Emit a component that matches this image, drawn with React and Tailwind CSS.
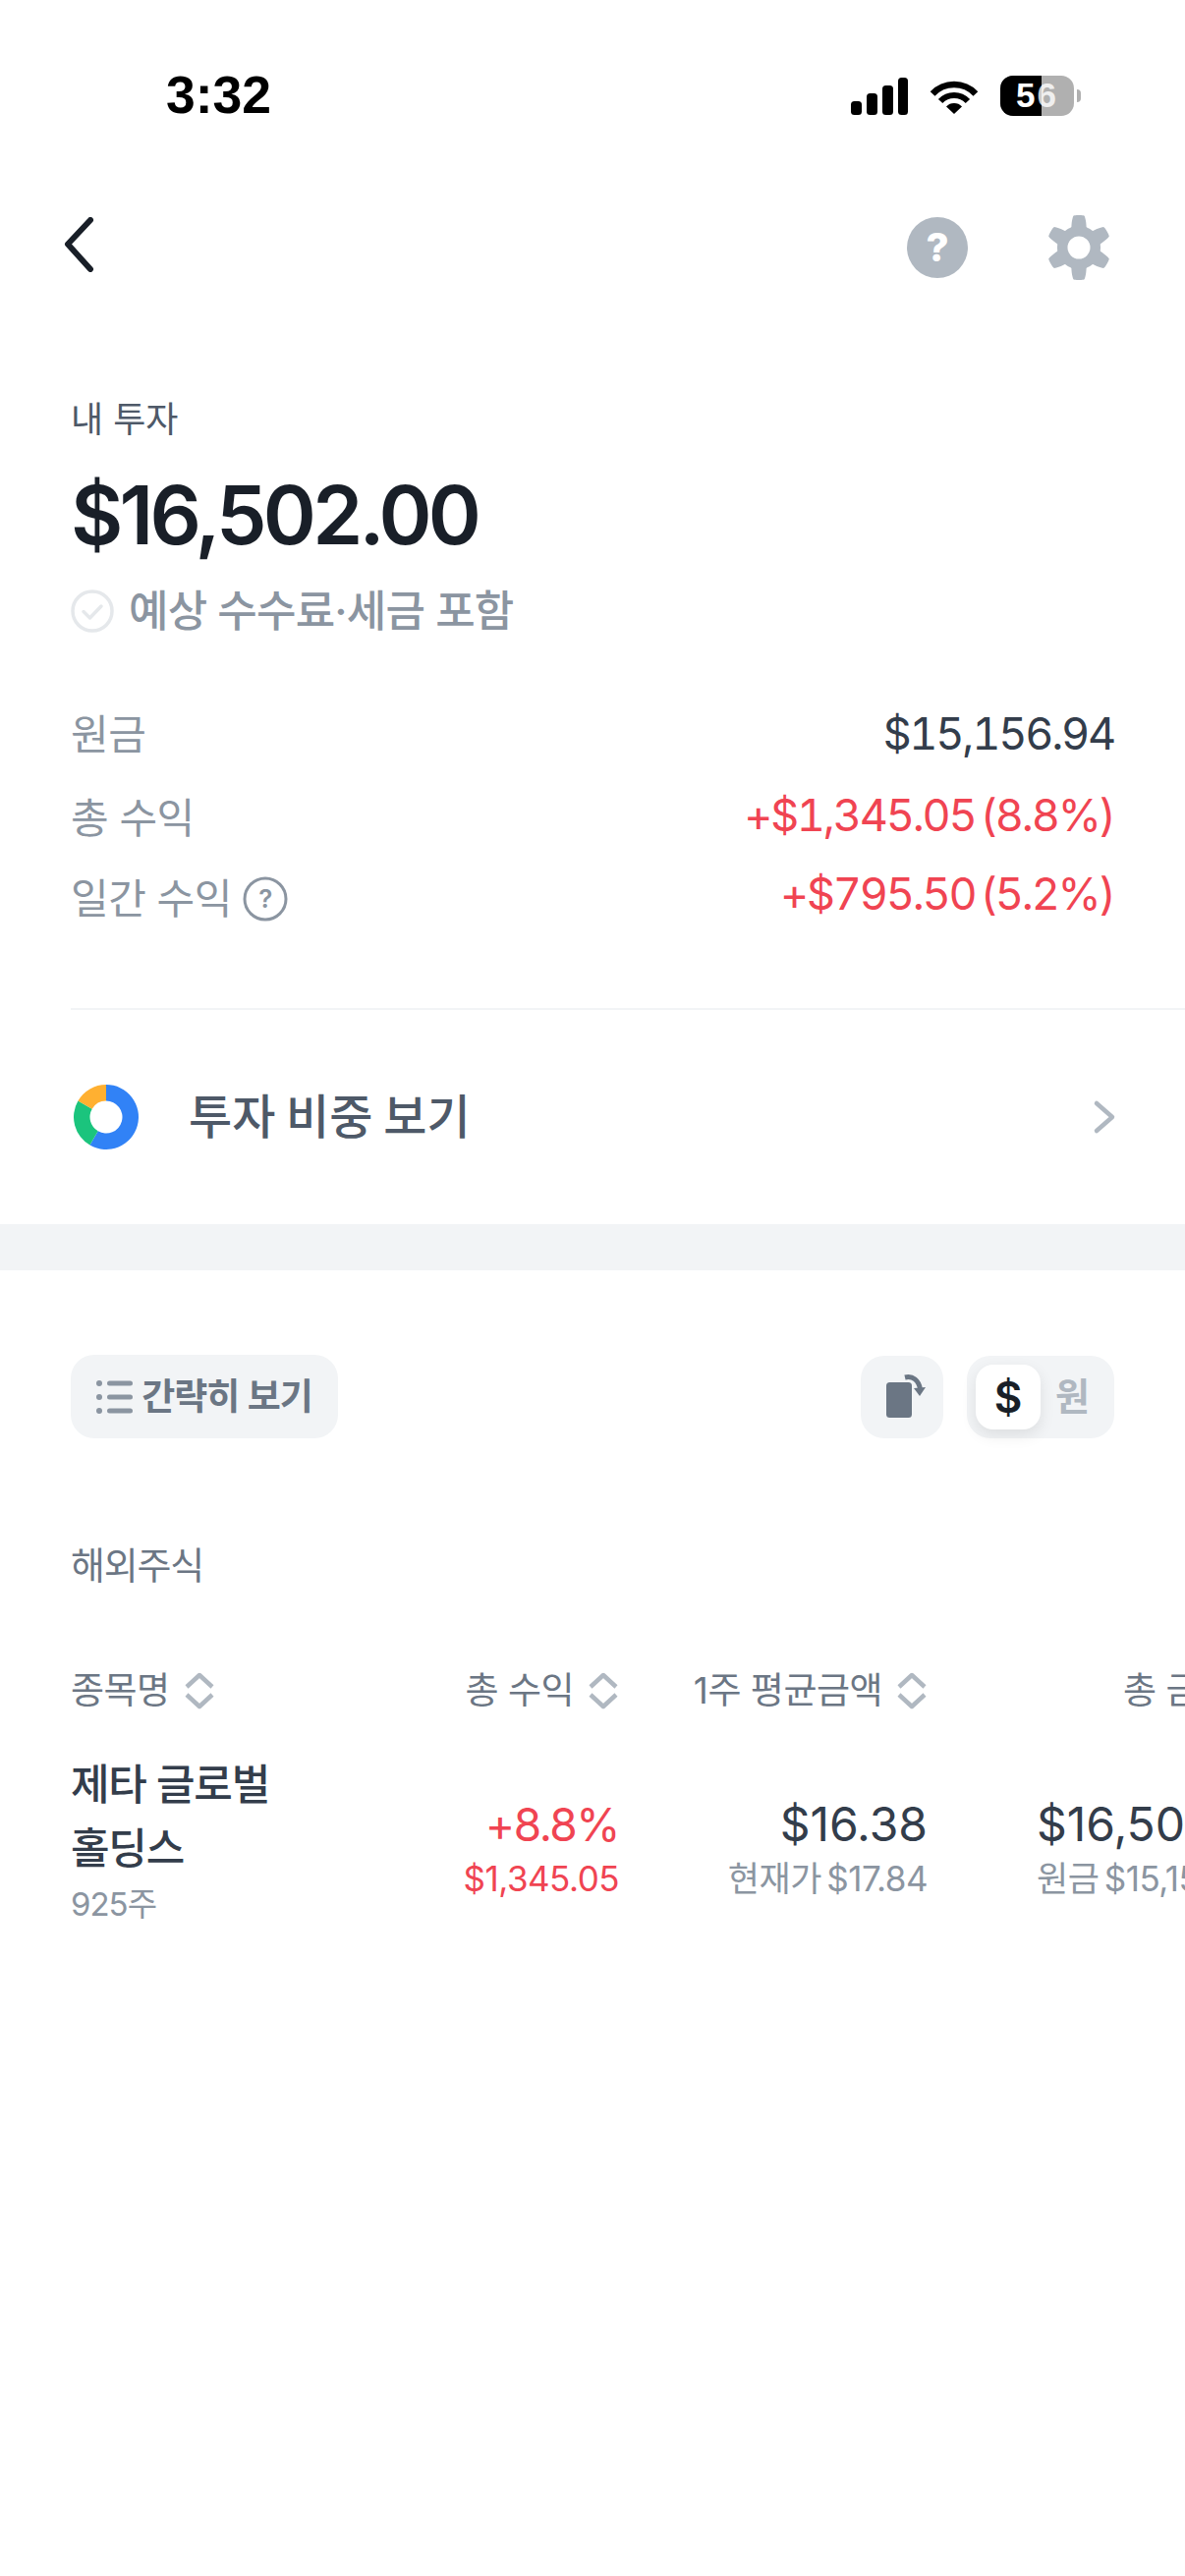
const font = { fontFamily: '"Inter", "Noto Sans CJK KR", sans-serif' };

function polar(cx, cy, r, deg) {
  const a = ((deg - 90) * Math.PI) / 180;
  return [cx + r * Math.cos(a), cy + r * Math.sin(a)];
}
function slice(from, to) {
  const [a, b] = polar(33, 33, 33, from);
  const [c, d] = polar(33, 33, 33, to);
  const [e, f] = polar(33, 33, 16.5, to);
  const [g, h] = polar(33, 33, 16.5, from);
  const large = to - from > 180 ? 1 : 0;
  return `M${a} ${b}A33 33 0 ${large} 1 ${c} ${d}L${e} ${f}A16.5 16.5 0 ${large} 0 ${g} ${h}Z`;
}
function gearPath() {
  let d = '';
  for (let i = 0; i <= 360; i += 2) {
    const t = Math.max(-1, Math.min(1, Math.cos((i * 6 * Math.PI) / 180) * 1.9));
    const [x, y] = polar(34, 34, 27.5 + 5.5 * t, i);
    d += `${i === 0 ? 'M' : 'L'}${x.toFixed(2)} ${y.toFixed(2)}`;
  }
  return d + 'ZM34 22.5a11.5 11.5 0 1 0 0 23a11.5 11.5 0 1 0 0-23Z';
}

function Sort() {
  return (
    <svg width="32" height="38" viewBox="0 0 32 38" fill="none" stroke="#b0b8c1" strokeWidth="4.5" strokeLinejoin="round" className="shrink-0">
      <path d="M3 15L16 3L29 15" />
      <path d="M3 23L16 35L29 23" />
    </svg>
  );
}

function Stat({ label, value, red, extra, mt, valueClass }) {
  return (
    <div className={`flex items-center justify-between h-[50px] ${mt}`}>
      <div className="flex items-center gap-[11px] text-[42px] tracking-[-0.5px] text-[#8b95a1] leading-[50px]">
        {label}
        {extra}
      </div>
      <div className={`text-[45px] leading-[50px] tabular-nums tracking-[-2.2px] [word-spacing:-5px] ${valueClass} ${red ? 'text-[#f04452]' : 'text-[#333d4b]'}`}>{value}</div>
    </div>
  );
}

function Col({ head, w, children }) {
  return (
    <div className={`${w} shrink-0 flex flex-col items-end`}>
      <div className="h-[50px] flex items-center gap-[14px] text-[37px] text-[#6b7684] tracking-[-0.5px]">{head} <Sort /></div>
      <div className="mt-[80px] flex flex-col items-end">{children}</div>
    </div>
  );
}

export default function App() {
  return (
    <div style={font} className="w-[1206px] h-[2622px] bg-white overflow-hidden">
      <div className="h-[194px] pt-[68px] pl-[169px] pr-[106px] flex justify-between items-start">
        <div className="text-[53.5px] leading-[58px] text-black" style={{ fontFamily: '"Liberation Sans", sans-serif', fontWeight: 700 }}>3:32</div>
        <div className="flex items-center gap-[22px] pt-[9px]">
          <svg width="58" height="38" viewBox="0 0 58 38" fill="#000">
            <rect x="0" y="24" width="11" height="14" rx="3.5" />
            <rect x="16" y="16" width="11" height="22" rx="3.5" />
            <rect x="32" y="8" width="11" height="30" rx="3.5" />
            <rect x="48" y="0" width="10" height="38" rx="3.5" />
          </svg>
          <svg width="50" height="38" viewBox="0 0 50 38" fill="none" stroke="#000">
            <path d="M3.1 16.5A30 30 0 0 1 46.9 16.5" strokeWidth="6.5" />
            <path d="M11.1 24A19 19 0 0 1 38.9 24" strokeWidth="6" />
            <path d="M25 37L17 29.5A11 11 0 0 1 33 29.5Z" fill="#000" stroke="none" />
          </svg>
          <div className="flex items-center">
            <div className="relative w-[75px] h-[41px] rounded-[13px] overflow-hidden bg-[#b0b0b0] flex">
              <div className="w-[42px] h-full bg-black" />
              <div className="absolute inset-0 flex items-center justify-center text-[35px] font-bold text-white tracking-[2px]" style={{ fontFamily: '"Liberation Sans", sans-serif' }}>5<span className="text-white/80">6</span></div>
            </div>
            <div className="w-[4px] h-[13px] ml-[3px] bg-[#b0b0b0] rounded-r-full" />
          </div>
        </div>
      </div>

      <div className="h-[112px] pl-[62px] pr-[74px] flex items-center justify-between">
        <svg width="36" height="56" viewBox="0 0 36 56" fill="none" stroke="#191f28" strokeWidth="6" strokeLinecap="round" strokeLinejoin="round" className="mb-[2px]">
          <path d="M30 3L7 27.5L30 53" />
        </svg>
        <div className="flex items-center gap-[78px] pt-[3px]">
          <svg width="64" height="64" viewBox="0 0 64 64">
            <circle cx="32" cy="32" r="31" fill="#b0b8c1" />
            <text x="32" y="46" textAnchor="middle" fontSize="40" fontWeight="800" fill="#fff" fontFamily="Inter">?</text>
          </svg>
          <svg width="68" height="68" viewBox="0 0 68 68" fill="#b0b8c1" fillRule="evenodd">
            <path d={gearPath()} />
          </svg>
        </div>
      </div>

      <div className="px-[72px] pt-[95px]">
        <div className="text-[36px] leading-[52px] text-[#4e5968]">내 투자</div>
        <div className="mt-[24px] text-[82px] leading-[96px] font-semibold text-[#191f28] tracking-[-3.8px]">$16,502.00</div>
        <div className="mt-[24px] flex items-center gap-[15px] h-[50px]">
          <svg width="44" height="44" viewBox="0 0 44 44" fill="none">
            <circle cx="22" cy="22" r="20" stroke="#e5e8eb" strokeWidth="3.5" />
            <path d="M13 22.5L19.5 29L31 17" stroke="#e5e8eb" strokeWidth="3.5" strokeLinecap="round" strokeLinejoin="round" />
          </svg>
          <div className="text-[44px] leading-[50px] font-medium text-[#8b95a1] tracking-[-0.8px]">예상 수수료·세금 포함</div>
        </div>
      </div>

      <div className="pl-[72px] pr-[72px] mt-[76px]">
        <Stat label="원금" value="$15,156.94" valueClass="mb-[2px]" />
        <Stat label="총 수익" value="+$1,345.05 (8.8%)" red mt="mt-[35px]" valueClass="mb-[6px]" />
        <Stat
          label="일간 수익"
          value="+$795.50 (5.2%)"
          red
          mt="mt-[32px]"
          valueClass="mb-[10px]"
          extra={
            <svg width="46" height="46" viewBox="0 0 46 46" fill="none">
              <circle cx="23" cy="23" r="21" stroke="#8b95a1" strokeWidth="3" />
              <text x="23" y="32" textAnchor="middle" fontSize="26" fontWeight="600" fill="#8b95a1" fontFamily="Inter" stroke="none">?</text>
            </svg>
          }
        />
      </div>

      <div className="ml-[72px] mt-[86px] h-[2px] bg-[#f2f4f6]" />

      <div className="h-[218px] pl-[75px] pr-[70px] flex items-center justify-between">
        <div className="flex items-center gap-[51px]">
          <svg width="66" height="66" viewBox="0 0 66 66">
            <path d={slice(0, 210)} fill="#3182f6" />
            <path d={slice(210, 300)} fill="#1bc47d" />
            <path d={slice(300, 360)} fill="#ffb031" />
          </svg>
          <div className="text-[48px] leading-[60px] font-medium text-[#4e5968] [word-spacing:-2px]">투자 비중 보기</div>
        </div>
        <svg width="24" height="36" viewBox="0 0 24 36" fill="none" stroke="#b0b8c1" strokeWidth="4.5" strokeLinecap="round" strokeLinejoin="round">
          <path d="M4 4L20 18L4 32" />
        </svg>
      </div>

      <div className="h-[47px] bg-[#f2f4f6]" />

      <div className="px-[72px] pt-[86px] flex items-center justify-between">
        <div className="h-[85px] w-[272px] rounded-[24px] bg-[#f2f4f6] flex items-center justify-center gap-[9px]">
          <svg width="37" height="34" viewBox="0 0 37 34" fill="#8b95a1">
            <circle cx="3" cy="3" r="3" />
            <circle cx="3" cy="17" r="3" />
            <circle cx="3" cy="31" r="3" />
            <rect x="11" y="0.5" width="26" height="5" rx="2.5" />
            <rect x="11" y="14.5" width="26" height="5" rx="2.5" />
            <rect x="11" y="28.5" width="26" height="5" rx="2.5" />
          </svg>
          <div className="text-[37px] font-semibold text-[#6b7684] tracking-[-1px]">간략히 보기</div>
        </div>
        <div className="flex items-center gap-[24px]">
          <div className="w-[84px] h-[84px] rounded-[24px] bg-[#f2f4f6] flex items-center pl-[26px]">
            <svg width="42" height="46" viewBox="0 0 42 46" fill="#6b7684">
              <rect x="0" y="8" width="26" height="36" rx="3.5" />
              <path d="M19 3C27 1 33 6 34.5 15" fill="none" stroke="#6b7684" strokeWidth="5" />
              <path d="M28 14L40 13L34 22Z" />
            </svg>
          </div>
          <div className="w-[150px] h-[84px] rounded-[24px] bg-[#f2f4f6] flex items-center pl-[9px]">
            <div className="w-[66px] h-[66px] rounded-[18px] bg-white flex items-center justify-center text-[44px] font-semibold text-[#191f28] shadow-[0_6px_16px_rgba(0,0,0,0.09)]">$</div>
            <div className="ml-[15px] text-[38px] font-bold text-[#b0b8c1]">원</div>
          </div>
        </div>
      </div>

      <div className="pl-[72px] pt-[102px] text-[38px] leading-[54px] text-[#6b7684] tracking-[-1.2px]">해외주식</div>

      <div className="mt-[76px] pl-[72px] flex whitespace-nowrap">
        <div className="w-[328px] shrink-0">
          <div className="h-[50px] flex items-center gap-[14px] text-[37px] text-[#6b7684] tracking-[-0.5px]">종목명 <Sort /></div>
          <div className="mt-[38px] text-[43px] leading-[65px] font-medium text-[#333d4b] tracking-[-1.2px]">제타 글로벌<br />홀딩스</div>
          <div className="mt-[3px] text-[33px] leading-[42px] text-[#8b95a1] tracking-[-1px]">925주</div>
        </div>
        <Col head="총 수익" w="w-[230px]">
          <div className="text-[46px] leading-[62px] text-[#f04452] tracking-[-1.5px]">+8.8%</div>
          <div className="text-[35px] leading-[48px] text-[#f04452] tracking-[-0.5px]">$1,345.05</div>
        </Col>
        <Col head="1주 평균금액" w="w-[314px]">
          <div className="text-[48px] leading-[62px] text-[#333d4b]">$16.38</div>
          <div className="text-[35px] leading-[48px] text-[#8b95a1] tracking-[-0.5px] [word-spacing:-4px]">현재가 $17.84</div>
        </Col>
        <div className="ml-[111px] shrink-0">
          <div className="h-[50px] flex items-center pl-[88px] text-[37px] text-[#6b7684] tracking-[-0.5px]">총 금액</div>
          <div className="mt-[80px] text-[48px] leading-[62px] text-[#333d4b]">$16,502.00</div>
          <div className="text-[35px] leading-[48px] text-[#8b95a1] tracking-[-0.5px] [word-spacing:-4px]">원금 $15,156.94</div>
        </div>
      </div>
    </div>
  );
}
